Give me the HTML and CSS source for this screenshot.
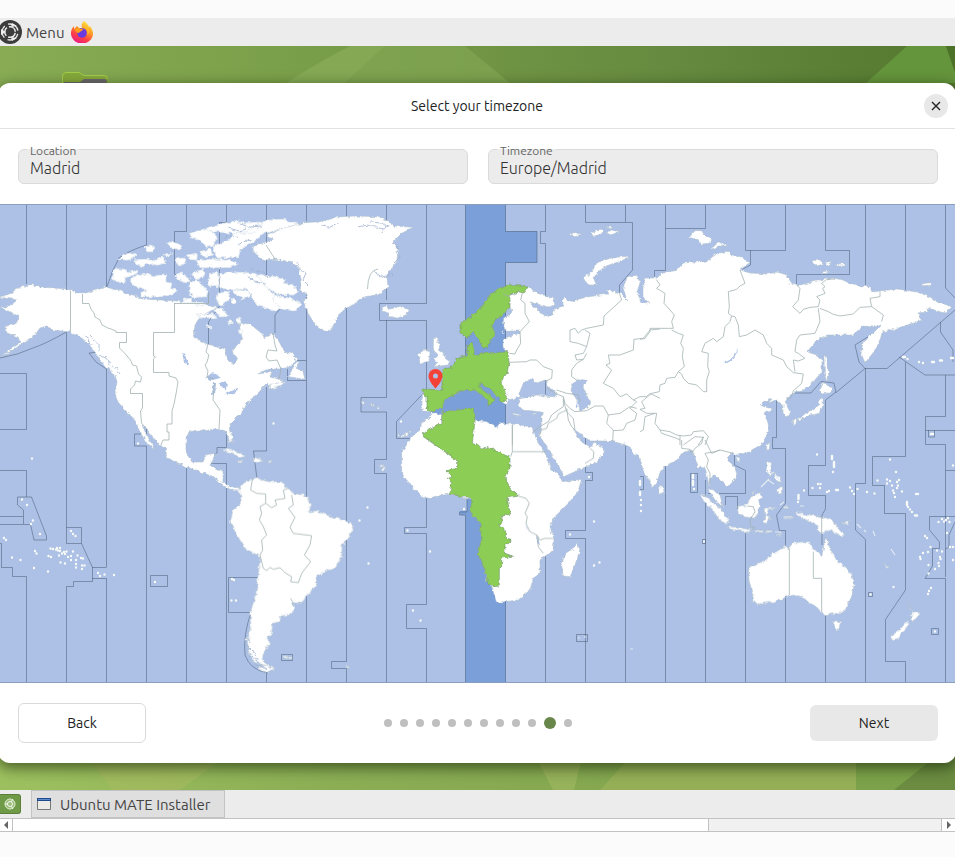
FILE: index.html
```html
<!DOCTYPE html>
<html lang="en">
<head>
<meta charset="utf-8">
<title>Ubuntu MATE Installer</title>
<link rel="stylesheet" href="styles.css">
</head>
<body>
<header class="panel">
  <button class="menu" type="button">
    <svg class="logo" viewBox="0 0 24 24" aria-hidden="true"><circle cx="12" cy="12" r="12" fill="#3c3c3c"/><g fill="none" stroke="#eee"><circle cx="12" cy="12" r="8" stroke-width="1.3" stroke-dasharray="13 3.75" stroke-dashoffset="-2"/><circle cx="12" cy="12" r="5.3" stroke-width="1.5" stroke-dasharray="9 2.1" stroke-dashoffset="-1"/></g><path d="M3 9v6l5-3zM13 7l1-4 5 3zM13 17l6 1-5 3z" fill="#eee"/><circle cx="12" cy="12" r="3.6" fill="#3c3c3c"/></svg>
    <span>Menu</span>
  </button>
  <a class="firefox" href="#" aria-label="Firefox">
    <svg viewBox="0 0 22 22" aria-hidden="true">
      <defs><linearGradient id="fox" x1=".8" y1="0" x2=".3" y2="1"><stop offset="0" stop-color="#fff04a"/><stop offset=".4" stop-color="#ff9b24"/><stop offset=".72" stop-color="#ff3d46"/><stop offset="1" stop-color="#e9168a"/></linearGradient></defs>
      <path d="M13 0c3 2 4 4 5 6l1-1c2 3 3 5 3 8a11 10 0 0 1-22-1c0-3 1-5 3-7v3l3-3 2 2 3 0c-1-3 0-5 2-7z" fill="url(#fox)"/>
      <circle cx="11" cy="12" r="4.8" fill="#6b3be0"/><path d="M4 8c2-2 4-1 5 0l3 0c0 2-3 2-4 4-2 0-4-2-4-4z" fill="#ff9c1c"/><path d="M11 7c4-1 7 3 5 7 2-1 3-5 1-7-2-2-5-2-6 0z" fill="#ffbd2e"/>
    </svg>
  </a>
</header>

<main class="desktop">
  <svg class="wallpaper" viewBox="0 0 955 744" preserveAspectRatio="none" aria-hidden="true">
    <defs>
      <linearGradient id="wall"><stop offset="0" stop-color="#88ab54"/><stop offset=".35" stop-color="#789d48"/><stop offset=".7" stop-color="#668a3f"/><stop offset="1" stop-color="#53782e"/></linearGradient>
      <linearGradient id="wall-low"><stop offset="0" stop-color="#9dc05f"/><stop offset=".35" stop-color="#8bae55"/><stop offset="1" stop-color="#7b9e49"/></linearGradient>
    </defs>
    <path d="M0 0H955V400H0z" fill="url(#wall)"/>
    <path d="M0 400H955V744H0z" fill="url(#wall-low)"/>
    <path d="M286 37Q315 18 350 0H385L345 37z" fill="#84a854"/><path d="M345 37L385 0H465L510 37z" fill="#82a553" opacity=".7"/>
    <path d="M866 37L907 0H946L955 26V37z" fill="#64943c"/><path d="M946 0H955V26z" fill="#4c7229"/>
    <path d="M80 700L112 744H180L240 700z" fill="#a7b960" opacity=".55"/>
    <path d="M530 700L553 744H574L585 700z" fill="#a1b961" opacity=".6"/><path d="M640 700L600 744H856V700z" fill="#94af56"/>
    <path d="M856 700V744H894L950 700z" fill="#7ba24a"/><path d="M894 744L955 695V744z" fill="#6b8c41"/>
  </svg>
  <svg class="folder" viewBox="0 0 46 24" aria-hidden="true"><path d="M0 24V5q0-4 4-4h13l5 3h20q4 0 4 4v16z" fill="#86a93c"/><path d="M.500 24V5q0-3.500 3.500-3.500h13l5 3h20q3.500 0 3.500 3.500" fill="none" stroke="#a4cc4c"/><path d="M2 24V11h16l4-3h20q3 0 3 3v13z" fill="#6a666b"/></svg>

  <section class="window">
    <header class="titlebar">
      <h1>Select your timezone</h1>
      <button class="close" type="button" aria-label="Close"><svg viewBox="0 0 10 10" aria-hidden="true"><path d="M1 1L9 9M9 1L1 9"/></svg></button>
    </header>
    <form class="fields">
      <div class="field"><label for="location">Location</label><input id="location" type="text" value="Madrid"></div>
      <div class="field"><label for="timezone">Timezone</label><input id="timezone" type="text" value="Europe/Madrid"></div>
    </form>

    <svg class="map" viewBox="0 204 955 479" role="img" aria-label="World timezones">
      <defs>
        <filter id="rough" x="0" y="0" width="100%" height="100%" color-interpolation-filters="sRGB">
          <feTurbulence type="fractalNoise" baseFrequency=".25" numOctaves="2" seed="4"/>
          <feDisplacementMap in="SourceGraphic" scale="4" xChannelSelector="R" yChannelSelector="G"/>
        </filter>
      </defs>
      <path class="sea" d="M0 204H955V683H0z"/>
      <path class="sea-on" d="M465.500 204.500H505.500V231.500H537V262.500H505.500V683H465.500V515H460V511H467V480H475V430L430 413L450 385L465.500 380z"/>
      <!-- zone limits over water -->
      <path class="zone" d="M26.500 204V284M0 373.500H26.500V429.500H0M0 470.500H26.500V497M17.500 497H31.500L46.500 536V540H34L30.500 524.500H0M17.500 497V505L23.500 510V524M0 516.500H23M0 543.500H1.500V567.500H12.500V576.500H26.500V683
      M66.500 204V290M66.500 332V543.500H81.500V527.500H66.500M81.500 543.500L92.500 567.500H106.500M92.500 567V581.500H73.500V586.500H66.500V683M92 578.500H106.500V683M66.500 332Q45 344 33 348Q18 355 0 358
      M106.500 204V288Q112 270 119 258Q130 250 146.500 245V204M100 352L89 353L96 362L106.500 369V567M146.500 425V434H134.500V446H146.500V683M186.500 204V231.500H174.500V274L190 281L208.500 293V303M186.500 468V683
      M226.500 204V222.500H219.500V306L208.500 322V344M226.500 425V447.500H217V453L208 459V464M211 463.500H226.500V683M266.500 204V295L283 305L275 315V333M306.500 204V683M297 360.500H306M287.500 368V380.500H306M266.500 387V451H253.500L257 479M266.500 673V683M228.500 577.500H258M228.500 577.500V612.500H251Q243 635 245 655Q250 670 268 673
      M346.500 204V661.500H331.500V668.500H346.500V683M386.500 204V300M386.500 320V397.500H361V412H386.500V459.500H374.500V473.500H386.500V683M426.500 204V303.500H379.500V320.500H426.500V390L396.500 421.500V438.500H412M426.500 490V527.500H404.500V533.500H426.500V604.500H406.500V628.500H426.500V683
      M465.500 204V356M505.500 204V231.500H537V262.500H505.500V430M467 498V512H459.500V515H465.500V683M505.500 590V683M545.500 204V231.500H540.500V243.500H545.500V300M545.500 375V396M545.500 550V683M585.500 204V222.500H632.500V270L619.500 285V293M625.500 204V222M585.500 435V448M585.500 465V472.500H592.500V480.500H585.500V530.500H565.500V538.500H585.500V683M625.500 445V683M640 476.500H643.500V489.500H640
      M665.500 204V270.500H654.500V280M665.500 228.500H705.500V204M665.500 466V683M690.500 473.500H697.500V492.500H690.500zM705.500 480V683M702.500 539.500H705.500V543.500H702.500zM745.500 204V250.500H785.500V204M750.500 250V265L741 270M725.500 505V496.500H737.500V510M708 493.500H745.500V470.500L734.500 465V452M745.500 533V683
      M776.500 400V437.500H772.500V448.500H785.500V503L776.500 515L779.500 530.500H785.500V550M785.500 590V683M825.500 204V250.500H849.500V274.500H796.500V284M793 393H811L821 381.500L834 383L836 392.500L865 368.500H887L955 310M882 328L855 345L859 362L865 368.500M836 392L825.500 400V465.500H808.500V495.500H825.500V509L822 515V545M825.500 610V683
      M865.500 204V288M865.500 368V483.500H855.500V530L865.500 539.500V683M905.500 204V290M905.500 362V456.500H872.500V485.500H884.500V513.500H905.500V590L885.500 619.500V661.500H905.500V683M899 357L925 375H955M945.500 204V288L955 298M940.500 322V332L953 350V362M945.500 375V416.500H925.500V444.500H945.500V577M925.500 430.500H955M928.500 430V437H934.500V430M945.500 470.500H955M955 516.500H929.500V530L939.500 542V548.500H932.500V566L925 578.500H945.500V683M955 522L949 535V547L945.500 549
      M931.500 628.500H938.500V634.500H931.500zM868.500 592.500H872.500V596.500H868.500zM150.500 575.500H167.500V586.500H150.500zM281.500 654.500H292.500V660.500H281.500zM576.500 634.500H587.500V641.500H576.500z"/>

      <g filter="url(#rough)">
        <g class="land">
          <!-- North America -->
          <path d="M-9 297L0 297L12 293L15 289L25 286L30 284L40 287L67 289L82 294L93 291L106 287L120 291L133 295L143 299L160 300L177 301L187 302L200 302L213 307L218 307L207 313L200 317L195 325L194 337L207 344L217 347L225 349L228 361L233 364L237 360L233 350L240 343L242 337L239 323L250 324L260 332L265 338L272 333L278 340L285 352L293 354L297 358L290 367L280 369L268 369L258 374L272 372L270 377L278 379L283 380L277 386L269 387L268 383L263 388L257 394L245 405L242 413L233 420L230 424L231 432L233 438L230 442L227 434L223 430L213 429L205 431L198 430L189 432L186 438L186 453L192 462L203 462L206 455L216 453L213 460L210 465L217 469L223 470L223 482L228 486L233 487L240 488L240 492L230 490L220 483L212 476L203 473L187 467L167 458L165 453L167 450L160 445L153 437L145 427L142 425L147 436L153 445L154 449L148 445L143 437L138 427L133 418L125 410L118 402L115 393L117 382L115 375L107 368L100 360L95 352L88 343L80 337L70 332L53 330L47 326L40 328L35 335L23 343L13 350L0 357L20 342L18 337L7 333L5 327L17 323L18 315L10 312L0 308L10 306L17 300L5 298z"/>
          <g class="archipelago" transform="translate(0 200) scale(.33333)">
            <path d="M342 206L375 208L382 218L410 212L408 222L380 232L372 250L338 242zM408 228L440 222L460 230L495 222L498 242L515 250L512 265L530 272L515 285L475 290L430 290L420 280L440 270L400 255L388 240zM355 178L372 163L410 158L405 172L382 180zM402 180L440 178L460 183L490 172L495 190L470 195L440 190L430 200L408 193zM435 140L462 138L460 155L442 155zM490 165L515 158L500 170zM500 128L520 125L545 138L542 150L515 143zM525 180L535 172L555 172L558 188L540 198zM525 228L545 220L570 240L558 248L540 242zM575 222L610 208L612 230L590 240zM568 245L590 240L625 275L618 290L580 292L568 278zM572 100L600 90L635 92L650 110L640 138L620 142L600 122L572 112zM560 165L592 160L590 180L568 178zM590 182L640 178L700 182L715 192L690 202L600 202zM600 155L630 148L640 165L610 170zM640 140L690 120L700 100L740 95L790 62L850 58L900 75L860 85L790 100L770 118L720 150L715 172L650 174zM605 90L650 75L720 60L710 70L790 66L760 100L700 100zM622 245L632 220L655 218L655 260L630 258zM660 222L700 216L760 220L800 245L805 270L845 310L850 322L820 332L770 315L760 295L740 265L700 270L660 264zM655 280L690 275L685 300L660 318L650 300zM640 328L665 325L685 350L660 350zM550 298L575 295L570 308L552 306zM585 310L610 308L608 318L588 318z"/>
            <path d="M770 222L830 232L855 240L850 250L880 255L895 275L880 285L830 282L800 262zM820 285L870 295L905 312L885 332L850 328L820 305zM700 272L745 270L750 290L720 300zM590 345L640 342L650 352L605 353zM620 375l14 4v5l-12-3z"/>
            <circle cx="702" cy="303" r="8"/><circle cx="690" cy="366" r="6"/><circle cx="717" cy="362" r="7"/><circle cx="722" cy="395" r="6"/>
          </g>
          <g transform="translate(220 200) scale(.33333)">
            <!-- Greenland, Iceland, Newfoundland, British Isles, Atlantic islands -->
            <path d="M95 140L160 118L140 105L190 85L250 68L300 65L360 50L410 48L470 50L505 62L520 78L580 82L545 100L520 125L535 150L530 185L515 205L500 235L505 262L470 285L425 292L400 315L378 325L355 345L340 380L325 393L295 385L270 350L250 305L262 285L240 270L245 245L235 205L215 185L165 178L130 180L105 160z"/>
            <path d="M486 322L500 318L505 328L545 318L568 330L560 345L530 355L505 348L508 340L490 335zM228 487L238 485L228 505L248 512L255 538L235 535L205 530zM152 553L195 545L180 560L150 568z"/>
            <path d="M595 462L612 450L630 455L628 480L600 490zM640 415L655 415L650 428L662 432L655 450L670 462L675 475L690 485L685 495L640 500L655 488L642 480L655 465L640 450z"/>
            <path d="M425 604h8v8h-8zM450 611h6v6h-6zM458 611h6v6h-6zM472 620h6v6h-6zM532 702h6v8h-6zM546 704h8v6h-8zM556 700h8v8h-8zM566 694l8 0l-4 6z"/>
          </g>
          <g transform="translate(220 440) scale(.33333)">
            <!-- South America and the Caribbean -->
            <path d="M50 150L60 148L75 125L110 112L125 120L150 125L185 125L205 145L220 160L255 165L275 195L265 215L290 212L320 225L355 235L395 250L400 270L385 295L367 315L365 350L345 385L320 392L290 410L290 435L265 460L245 490L215 488L225 510L210 525L182 528L180 545L158 550L155 585L140 592L152 608L130 640L125 655L145 680L120 672L100 665L85 630L82 600L92 560L90 520L107 465L115 400L120 350L75 325L50 285L30 245L38 215L62 190L62 160z"/>
            <path d="M118 675L142 676L165 685L140 698L118 688zM5 32L30 26L80 50L60 52L35 38zM95 58L105 52L130 62L108 68zM55 63h12v5h-12zM142 63h12v5h-12zM25 0h15v6h-15zM480 75h8v6h-8zM483 90L495 78V92zM190 648h10v8h-10zM203 649h12v7h-12zM76 592h12v8h-12zM378 679h10v4h-10z"/>
          </g>
          <!-- Eurasia -->
          <path fill-rule="evenodd" d="M460 324L470 317L482 307L490 295L500 288L510 285L528 287L537 293L553 298L555 305L548 307L530 302L538 310L545 316L553 315L555 309L563 306L563 297L568 302L587 297L607 294L608 290L620 293L627 300L623 288L627 278L637 275L640 283L637 292L641 302L649 303L643 297L643 287L646 278L657 278L662 273L677 270L683 263L707 261L715 255L727 251L732 256L743 257L749 263L740 270L750 273L767 274L777 272L787 275L790 283L800 285L820 280L833 278L843 280L853 285L870 287L872 292L880 291L897 289L917 292L930 297L940 303L952 307L945 313L927 308L928 312L918 313L922 320L907 325L892 330L882 332L879 343L873 353L865 363L861 353L863 342L873 333L882 325L873 327L863 326L853 335L827 335L817 340L807 352L817 355L822 360L822 372L813 382L802 391L793 392L785 402L790 412L787 417L783 413L783 405L777 400L768 403L772 399L763 402L760 405L765 407L772 409L764 413L768 423L769 430L763 443L750 452L737 455L732 453L727 458L735 468L737 475L735 480L727 487L725 483L720 480L715 475L710 477L709 488L720 495L723 506L717 503L710 492L708 480L705 468L698 467L695 457L692 450L682 453L677 460L665 466L660 472L657 483L653 488L643 470L640 458L634 454L628 445L610 441L590 441L582 435L575 430L574 432L582 442L590 448L595 442L605 451L597 462L583 468L563 477L560 468L550 452L539 435L542 423L542 412L523 410L518 405L519 399L537 395L555 397L557 393L548 387L545 380L537 383L532 378L523 383L520 392L520 397L508 400L507 405L502 402L498 398L492 390L480 383L479 387L495 400L488 407L488 400L475 390L460 391L445 400L442 408L430 412L422 410L422 400L423 389L442 390L443 380L442 370L452 367L457 358L468 355L467 347L472 342L474 347L473 355L487 353L508 352L503 347L503 340L508 337L520 333L520 331L505 331L503 320L512 312L510 307L503 315L495 320L492 327L495 333L490 342L483 348L477 337L473 332L467 338L460 333zM572 383L577 380L587 380L583 387L585 393L590 400L588 408L580 410L577 400L571 391z"/>
          <g transform="translate(420 200) scale(.33333)">
            <path d="M490 235L515 215L530 190L570 175L620 168L625 175L585 188L555 200L535 215L520 235L530 255L505 255zM445 102L465 98L485 102L465 110zM510 100L530 92L550 90L545 102L525 108zM560 98L575 90L600 96L570 105zM560 80l20 2l-10 5zM280 640l25 3v4l-25-3zM335 642l15-3l-8 7zM245 395l8 3l-5 5z"/>
          </g>
          <g transform="translate(640 200) scale(.33333)">
            <path d="M148 112L165 92L185 92L195 108L215 118L212 130L185 132L170 118zM215 142L235 125L260 138L235 138L225 148zM515 182L540 180L550 192L530 198zM555 185L575 188L565 196zM588 192L615 190L620 198L595 198zM545 215l20-2l-5 8l-15-2zM845 252L870 248L872 256L848 257zM552 465L560 470L562 505L570 515L560 545L553 520zM540 570L550 548L580 565L570 578L545 582zM540 595L550 600L548 620L535 642L510 645L490 658L480 652L510 632L535 618zM457 660L470 655L468 672L460 678zM475 655L485 653L482 662L475 663z"/>
          </g>
          <!-- Africa -->
          <g transform="translate(390 380) scale(.33333)">
            <path d="M125 98L155 105L155 95L250 85L255 120L290 125L322 145L330 130L365 132L425 140L445 190L465 220L480 260L510 290L515 305L575 298L565 330L540 365L490 415L480 440L492 480L490 510L450 540L450 580L430 595L420 630L385 660L320 668L305 620L290 600L285 570L262 520L275 480L270 430L240 400L245 360L210 350L180 342L105 355L65 320L35 280L35 215L60 175L90 150L95 130L120 110z"/>
            <path d="M562 487L570 510L550 570L540 590L520 588L515 555L525 520L548 508z"/>
          </g>
          <!-- South-east Asia and Oceania -->
          <g transform="translate(640 440) scale(.33333)">
            <path d="M178 165L195 168L240 205L265 235L262 252L240 242L215 205L200 195zM262 260L290 262L335 270L330 277L265 267zM290 200L320 195L335 170L360 158L365 170L355 180L360 195L345 235L320 232L295 220zM372 205L415 202L385 210L378 225L398 240L385 235L382 250L370 248L375 225zM380 65L395 68L390 95L400 100L390 105L378 90zM400 100L418 110L425 130L410 125zM408 150L425 140L425 162L415 158zM380 15L390 8L388 28L380 30zM287 55L302 52L295 67zM55 140L68 140L73 158L60 162L55 152zM465 220L485 215L490 225L515 225L545 230L580 240L590 260L615 288L595 285L570 268L545 280L530 270L535 258L500 240L480 232zM345 272h25v5h-25zM375 272h22v5h-22zM405 288L428 278L420 285zM430 200h15v5h-15zM430 232h35v4h-35zM605 250L630 240L625 252zM335 160l12-12l-8 12z"/>
            <path d="M325 395L330 380L375 362L400 340L435 320L445 325L460 308L505 305L515 320L545 348L557 290L570 325L590 360L635 400L643 435L635 470L612 515L560 525L545 518L525 495L505 490L490 470L450 465L430 475L405 485L355 492L338 485L342 465L328 430z"/>
            <path d="M575 545L602 545L598 565L588 570zM803 492L820 515L842 520L828 535L820 550L810 535L818 515zM800 545L808 552L775 595L755 600L752 590L780 568zM730 370l18 12l-6 2z"/>
          </g>
        </g>

        <!-- selected zone -->
        <g class="land-on">
          <path d="M460 324L470 317L482 307L490 295L500 288L510 285L528 287L524 293L519 292L510 295L510 307L503 315L495 320L492 327L495 333L490 342L488 348L483 348L477 337L473 332L467 338L460 333z"/>
          <path d="M442 370L452 367L457 358L468 355L467 347L472 342L474 347L473 355L487 353L508 352L509 363L507 373L500 383L507 393L506 400L502 402L498 398L492 390L480 383L479 387L495 400L488 407L488 400L475 390L460 391L445 400L442 408L430 412L427 409L427 396L423 394V389L442 390z"/>
          <path transform="translate(390 380) scale(.33333)" d="M155 95L250 85L255 125L247 190L285 207L295 202L360 232L360 265L345 290L360 325L385 348L352 353L355 375L362 402L338 408L328 440L345 445L347 475L360 477L358 490L345 493L345 520L368 528L335 535L335 562L328 565L328 618L310 620L295 612L285 570L262 520L275 480L270 430L240 400L245 358L225 350L210 350L180 340L185 310L175 295L185 290L170 272L200 265L200 240L100 170L100 158L155 130z"/>
        </g>
        <!-- lakes and inlets -->
        <path class="lake" d="M182 353L186 357L189 366L184 361zM205 378L213 372L221 378L212 380zM213 383L216 383L215 395L212 394zM219 383L227 381L226 391L222 388zM225 394L237 388L238 391L228 395zM723 363Q734 360 738 348Q736 359 727 363zM525 519Q524 527 530 531Q524 529 525 519zM538 535L540 546L537 541zM506 332L509 331L508 335zM232 346L237 347L234 343zM575 406L578 403L577 407zM234 295L243 297L236 306zM252 308L262 311L254 316z"/>
        <path class="arctic" d="M228 228l12 3 6-2M222 238l10-3 6 3M238 245l8-5 5 1M240 224l10 3 12-1M321 226l8 1 10-3M358 227l10-2 16 4M370 222l12 1 5 4M381 233l5-6 6-2M392 243l6 3-2 6 4 5-6 6M250 268l8 4 4-2 6 8M247 276l8 6 10 2M296 262l4 8 6 3-3 7 5 5M247 645l6 6 4 8M249 656l7 3 5 7M254 665l8 1 5 4M247 638l4 5M84 336l5 3 2 6M90 335l5 6 4 3v7M99 355l7 3 4 6M108 364l8 4 4 6M388 271l5 5M374 272l8 5 8-2"/>
      </g>
      <!-- zone limits over land -->
      <g class="border">
          <path d="M174 303.500H208.500V293M174.500 303V332.500H153.500V356l2 1-2 2V372.500H169V376l7 2 2 4-2 12-2 10-2 7V424H167V432H169V440H163L161 445M70.500 291V332M82.500 294V303.500H89L91 309l3 4 1 4 5 3 2 5 6 3 3 1 5 2V332.500H126.500V342.500H119.500V348l5 5 6 7 2 5 4 1 2 8 3 3-1 5-5-1-1 4-4 4V393.500H142.500V408l-2 3 1 12 5 6M208 344l-2 8 3 3-2 7-2 3 3 6-1 6 7 2M215 383l-1 5-1 12 7 10-1 19M273 333l2 12 2 6-9-1-2 7 3 4 8-1 4 9-2 10M367.500 289Q368 270 378 269M266 245L275 259"/>
          <g transform="translate(220 440) scale(.33333)"><path d="M97 118L92 150L110 160L137 162V190L155 203L170 195L165 180L195 175L190 150L205 145M137 190L120 200L125 220L118 240L130 260L140 285L125 300L128 330L120 345L130 385L140 392L150 382L160 388L180 383L195 398L215 410L212 425L235 428L245 400L272 365L253 345L270 315L275 287L220 280L210 262L225 232L205 205L220 195L215 165M212 475L220 490"/></g>
          <g transform="translate(420 200) scale(.33333)">
            <path d="M250 282L268 290L275 282L285 285L300 270M308 275L302 300L315 310L315 340L328 365L300 395L302 430L290 450L285 462L268 460M268 487L320 485L330 480L350 480L370 500L397 510L395 535L375 545M598 280L605 300L552 348L550 375L500 385L485 390L475 400L465 385L450 390V425L475 430L500 440L510 400L495 390M500 440L490 460L465 465L470 480L490 478L500 460M490 478L470 490L455 510L455 530L470 540M720 387L690 390L670 415L642 418L640 450L600 465H565L570 490L558 495L575 510L550 550L580 565L600 590L620 582L640 600L660 590L680 590L690 580L720 595M410 570L440 580L475 585L480 605M380 565L410 582L430 590L435 610L450 625L465 635L500 632L525 618L550 618L565 645L560 670L580 690L578 725M565 645L600 640L630 620L650 625M640 600L650 605L630 625L650 640L645 660L620 670L610 690L580 692M430 590V620L415 630L395 645L385 665L360 680L340 695M440 625L445 660L455 680L465 690M277 675V735"/>
          </g>
          <g transform="translate(640 200) scale(.33333)">
            <path d="M50 240L60 255L50 265L75 280L72 310L90 330L103 345L95 365L100 385H30V395L15 415L0 418M95 390L115 400L130 405L122 430L130 445L127 470L133 500L115 515L125 522L130 535L145 550L170 555L190 575H200L200 540L208 515L203 500L205 460L185 455L195 430L220 415L230 425L250 410L255 380L270 365L275 348L265 340L268 320L265 275L290 268L300 258L315 250L300 210M275 348L285 350L295 375L298 410L320 405L345 390L370 405L380 430L395 445V465L430 480L440 500L460 518L490 522L485 550L460 572L455 590L440 600M470 255L480 265L475 300L458 320L480 340L490 328L510 322L535 320L540 300L530 290L555 280L548 265L555 260L545 250L560 238L585 237M535 325L540 365L525 400L480 405L470 420L465 455L475 460L495 475L475 483L460 480L465 515M540 325L565 335L580 343L600 348L620 345L640 342L660 322L695 320L690 295L720 290V275M695 320L730 345L725 365M115 515L105 532L80 535L75 550L60 555L58 575L35 580L5 605L15 625L0 628L20 640L50 640L45 670L60 690L90 695L110 705L130 708L155 705L160 695L190 692L205 710L195 735M45 640L15 650L10 690L0 695M60 690L65 700L110 715L120 720M120 705V735M130 735L165 710L190 712L175 735"/>
          </g>
          <g transform="translate(390 380) scale(.33333)"><path d="M367 132V215H467M362 230L367 215M385 348L408 355L418 370L405 400L412 410L408 430L420 455L440 465L450 480L465 475L490 475M440 465L445 500L460 520M447 165L455 150L470 145L475 130L500 115L505 102L530 90M520 60L530 95L550 115L555 150M585 250L610 235L612 215L600 205M155 95V130"/></g>
          <g transform="translate(640 440) scale(.33333)"><path d="M448 325V465M520 335V415H545V518M545 232V280M322 198L340 200L345 215L330 240L332 260L345 262L335 270M195 40L205 60L200 80L210 100L210 130M195 40L225 35L240 30L280 40M125 0V25L150 28L155 40L165 25L185 10L190 -10M195 0L215 40L240 30"/></g>
      </g>
      <!-- small islands -->
      <path class="isles" d="M22 499.500h0M27 505h0M33 520.500h0M31 524h0M40 534h0M32 458.500h0M4 538h0M6 540h0M12 557.500h0M20.500 560h0M34 568h0M48 571.500h0M35 551h0M36.500 553.500h0M48.500 556h0M51 557h0M50.500 548.500h0M53 549h0M56 549.500h0M57 548h0M60 548h0M58 550.500h0M60 551h0M62 553.500h0M64 552h0M66.500 551.500h0M65 554h0M59 555.500h0M68 557h0M73 551.500h0M71 556h0M71 560h0M76 560h0M77.500 555.500h0M81 558h0M83 558.500h0M60.500 562.500h0M65 563.500h0M76 564h0M76 567.500h0M82 565.500h0M84.500 565.500h0M82 569h0M98 573h0M100 576h0M104.500 574.500h0M114 575h0M155 582h0M138 443.500h0M232 579h0M234 580h0M231.500 600.500h0M236 600.500h0M71 531h0M73 534h0M75.500 536h0M273.500 423.500h0M359.500 520.500h0M367.500 507.500h0M368.500 563.500h0M407.500 530.500h0M430 551.500h0M413 610.500h0M420.500 620.500h0M464 509h0M570 534.500h0M594 521.500h0M594 565.500h0M599.500 562.500h0M589 477h0M401 421.500h0
      M693 475v3M693 481v4M694 489h0M640 492v3M641 500h0M640 481v4M641 505h0M641 511h0M704 541.500h0M817 454.500h0M832 456v3M834 462v5M833 472h0M812.500 488h0M818 484h0M820.500 484h0M820 488h0M804 490.500h0M798.500 495v4M798 502h0M827 492h0M836 490h2M850 487.500h0M854 494h0M857.500 489h0M867 492h0M874.500 493.500h0M829 491h0M852 491h0M890 459.500h0M896 472h0M877.500 480.500h0M887 479.500h0M887 483.500h0M890 481h0M892 485.500h0M893 490.500h0M897 482h0M899 480h0M898 485.500h0M895 497h0M902 491.500h0M894 493h0M897 488h0M916 494h0M918 494h0M907 502v3M908 507h0M910 509.500h0M912 512h0M915 515.500h2M925 536h0M927 538h0M930.500 547h0M920 557h0M920.500 559h0M928.500 565h0M937 550.500h0M942 551.500h0M940.500 559h0M940 557h0M938.500 563h0M939 566h0M935 569h0M928.500 573.500h0M928 552h0M923 553h0M893.500 587h0M931 588h0M929 591h0M928 594h0M935 631.500h0M870.500 594.500h0M938.500 522h0M942 519h0M944 521.500h0M946 520h0M948 518h0M949.500 522h0M947 533h0M950 547h0M953 547h0M953 560h0M953 465.500h0M931 434h2M903 357h2M907.500 359h0M919 362h0M923 363h0M932 362h2M940 360.500h2M951 358h2"/>
      <path class="chains" d="M578 638h2M584 637h2M630 649h3M768 480l6 4M775 474l4 6M761 487l8-8M780 505l4-3M798 515h6M775 532h6M857 524l4 4M864 530l2 2M873 531l2 5M891 549l4 6M770 474l4-2M800 506h4"/>
      <path class="frame" d="M0 204.500H955M0 682.500H955"/>
      <path class="pin" fill-rule="evenodd" d="M435.500 369a7 7 0 0 0-7 7c0 5 7 12.500 7 12.500s7-7.500 7-12.500a7 7 0 0 0-7-7zm0 4.500a2.500 2.500 0 1 1 0 5a2.500 2.500 0 0 1 0-5z"/>
    </svg>

    <footer class="actions">
      <button class="button outlined" type="button">Back</button>
      <ol class="steps" aria-label="Progress"><li></li><li></li><li></li><li></li><li></li><li></li><li></li><li></li><li></li><li></li><li class="current" aria-current="step"></li><li></li></ol>
      <button class="button filled" type="button">Next</button>
    </footer>
  </section>
</main>

<footer class="panel taskbar">
  <button class="show-desktop" type="button" aria-label="Show desktop"><svg viewBox="0 0 12 12" aria-hidden="true"><circle cx="6" cy="6" r="5" fill="#9dbd7d" stroke="#e1edcf"/><g fill="none" stroke="#f2f8ea"><circle cx="6" cy="6" r="2.500"/><path d="M1 6h3M7 4l2-3M7 8l2 3"/></g></svg></button>
  <button class="task" type="button">
    <svg viewBox="0 0 14 12" aria-hidden="true"><path d="M.5.500h13v11H.5z" fill="#ecebe8" stroke="#777"/><path d="M0 0h14v3H0z" fill="#1d4b8d"/><path d="M1 1h12v1H1z" fill="#5d8cc7"/></svg>
    <span>Ubuntu MATE Installer</span>
  </button>
</footer>
<div class="scrollbar" aria-hidden="true"><span class="arrow left"></span><span class="thumb"></span><span class="track"></span><span class="arrow right"></span></div>
</body>
</html>
```
FILE: styles.css
```css
* { box-sizing: border-box; }
body {
  margin: 0;
  padding-top: 18px;
  background: #fbfbfb;
  color: #333;
  font-family: Ubuntu, "Noto Sans", "Open Sans", sans-serif;
  font-size: 14px;
  overflow-x: hidden;
}
button { border: 0; padding: 0; font: inherit; color: inherit; background: none; }
svg { display: block; }

.panel { display: flex; align-items: center; height: 28px; background: #ececec; color: #444; font-size: 15px; }
.menu { display: flex; align-items: center; gap: 4px; margin-left: -2px; }
.logo { width: 24px; height: 24px; }
.firefox { margin-left: 7px; }
.firefox svg { width: 22px; height: 22px; }

.desktop { position: relative; padding: 37px 0 27px; overflow: hidden; background: #7b9e49; }
.wallpaper { position: absolute; inset: 0; width: 100%; height: 100%; }
.folder { position: absolute; left: 62px; top: 25px; width: 46px; }

.window {
  position: relative;
  margin: 0 -1px 0 -2px;
  border-radius: 12px;
  background: #fff;
  box-shadow: 0 4px 14px 1px rgba(20, 35, 5, .6);
}
.titlebar { display: grid; grid-template-columns: 1fr auto 1fr; align-items: center; height: 46px; padding: 0 8px; border-bottom: 1px solid #e2e2e2; }
.titlebar h1 { grid-column: 2; margin: 0; font-size: 14px; font-weight: 400; line-height: 20px; color: #222; }
.close { display: grid; place-items: center; justify-self: end; width: 24px; height: 24px; border-radius: 50%; background: #e8e8e8; }
.close svg { width: 10px; height: 10px; fill: none; stroke: #222; stroke-width: 1.4; }

.fields { display: grid; grid-template-columns: 1fr 1fr; gap: 20px; padding: 20px 18px 20px 20px; }
.field { position: relative; }
.field label { position: absolute; top: -5px; left: 9px; padding: 0 3px; line-height: 14px; font-size: 12px; color: #666; background: linear-gradient(transparent 5px, #ececec 5px); }
.field input { display: block; width: 100%; height: 35px; padding: 3px 11px 0; border: 1px solid #dadada; border-radius: 6px; background: #ececec; color: #333; font: inherit; font-size: 16px; font-weight: 300; outline: 0; }

.map { width: calc(100% - 3px); height: auto; margin-left: 2px; }
.sea { fill: #acc1e5; }
.sea-on { fill: #7b9fd8; }
.zone { fill: none; stroke: #3e546c; stroke-opacity: .48; }
.land path, .land circle { fill: #fff; stroke: #b4c2cc; stroke-width: .6; vector-effect: non-scaling-stroke; }
.land .archipelago path, .land .archipelago circle { stroke: #e6ecf0; stroke-width: 1; }
.land-on path { fill: #8ccd56; stroke: #6f916b; stroke-width: .6; vector-effect: non-scaling-stroke; }
.lake { fill: #acc1e5; }
.border path { fill: none; stroke: #a3b3b3; stroke-width: .8; vector-effect: non-scaling-stroke; }
.isles { fill: none; stroke: #f8faf8; stroke-width: 2.4; stroke-linecap: round; }
.chains { fill: none; stroke: #e2eaf3; stroke-width: 1.2; }
.arctic { fill: none; stroke: #9fb3d0; stroke-width: .8; }
.frame { fill: none; stroke: #8a9fbe; }
.pin { fill: #f44336; }

.actions { display: flex; align-items: center; justify-content: space-between; padding: 20px 18px 20px 20px; }
.button { width: 128px; border-radius: 6px; color: #222; }
.outlined { height: 40px; border: 1px solid #dadada; background: #fff; }
.filled { height: 36px; background: #e8e8e8; }
.steps { display: flex; align-items: center; gap: 8px; margin: 0; padding: 0; list-style: none; }
.steps li { width: 8px; height: 8px; border-radius: 50%; background: #bfbfbf; }
.steps .current { width: 12px; height: 12px; background: #69864a; }

.taskbar { align-items: stretch; gap: 10px; }
.show-desktop { display: flex; align-items: center; align-self: center; justify-content: center; width: 21px; height: 20px; border: 1px solid #5c803b; border-left: 0; border-radius: 0 3px 3px 0; background: #6f9a48; }
.show-desktop svg { width: 12px; height: 12px; }
.task { display: flex; align-items: center; gap: 9px; width: 194px; padding: 0 5px; border: 1px solid #c3c3c3; background: #dfdfdf; }
.task svg { flex: none; width: 14px; height: 12px; }
.task span { white-space: nowrap; }

.scrollbar { display: flex; height: 14px; border: solid #c2c2c2; border-width: 1px 0; background: #fff; }
.thumb { flex: 696; border: solid #c2c2c2; border-width: 0 1px; }
.track { flex: 233; background: #f1f1f1; }
.arrow { display: grid; place-items: center; width: 12px; }
.arrow::before { content: ""; border: 4px solid transparent; }
.left::before { border-right-color: #666; border-left-width: 0; }
.right { width: 14px; border-left: 1px solid #c2c2c2; }
.right::before { border-left-color: #666; border-right-width: 0; }
```
